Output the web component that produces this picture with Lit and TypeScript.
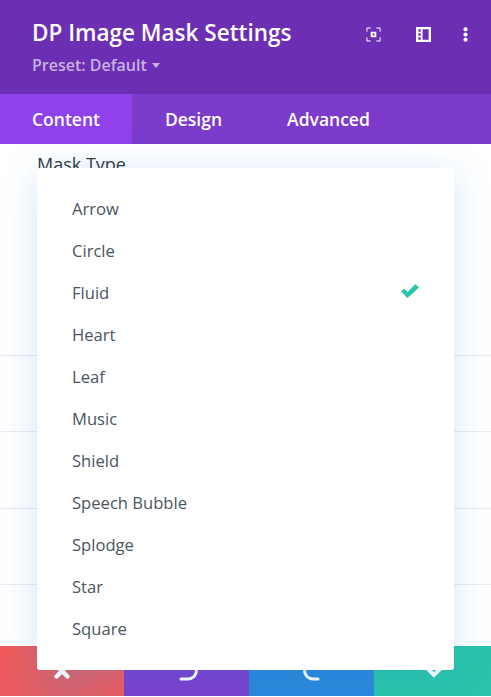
import { LitElement, html, css, svg } from "lit";
import { customElement } from "lit/decorators.js";

const OPTIONS = ["Arrow","Circle","Fluid","Heart","Leaf","Music","Shield","Speech Bubble","Splodge","Star","Square"];

@customElement("app-root")
export class AppRoot extends LitElement {
  static styles = css`
    :host { display: block; width: 491px; height: 697px; font-family: "Open Sans", sans-serif; background: #fff; overflow: hidden; }
    .modal { position: relative; display: flex; flex-direction: column; height: 696px; overflow: hidden; }
    .head { height: 94px; box-sizing: border-box; background: #6c2eb3; padding: 17px 32px 0; display: flex; justify-content: space-between; flex: none; }
    h1 { margin: 0; font-size: 22.5px; line-height: 32px; font-weight: 600; color: #fff; }
    .preset { margin-top: 6px; font-size: 16px; line-height: 20px; font-weight: 600; color: #c9b1e6; display: flex; align-items: center; gap: 5px; }
    .caret { width: 0; height: 0; border-left: 4px solid transparent; border-right: 4px solid transparent; border-top: 5px solid #c9b1e6; margin-top: 1px; }
    .icons { display: flex; align-items: flex-start; padding-top: 10px; margin-right: -13.5px; }
    .icons svg { display: block; width: 15px; height: 15px; fill: #fff; }
    .i1 { margin-right: 35px; } .i2 { margin-right: 26.5px; }
    .tabs { height: 50px; background: #7c3bcb; display: flex; flex: none; font-size: 17.5px; font-weight: 600; color: #fff; }
    .tab { display: flex; align-items: center; padding: 0 32px; }
    .tab.on { background: #8f42ec; }
    .tab.d { padding: 0 33px 0 33px; }
    .body { flex: 1 1 0; min-height: 0; overflow: hidden; background: #fff; display: flex; flex-direction: column; }
    .label { padding: 8px 37px 0; font-size: 18px; line-height: 24px; color: #32373c; font-weight: 500; height: 211px; box-sizing: border-box; flex: none; }
    .row { height: 76.33px; border-top: 1px solid #eaedf0; box-sizing: border-box; flex: none; }
    .foot { height: 50px; display: grid; grid-template-columns: 124px 125px 125px 117px; flex: none; color: #fff; }
    .foot div { display: flex; justify-content: center; align-items: center; }
    .foot svg { width: 24px; height: 24px; fill: none; stroke: #fff; stroke-width: 3; stroke-linecap: round; }
    .foot .x { stroke-width: 4.5; }
    .foot .c { stroke-width: 4; stroke-linecap: butt; }
    .f1 { background: linear-gradient(115deg, #f35a5a 0%, #d9616a 60%, #ef5a5c 100%); }
    .f2 { background: #7a40cc; }
    .f3 { background: #2b87da; }
    .f4 { background: #29c4a9; }
    .menu { position: absolute; left: 37px; top: 168px; width: 417px; height: 502px; box-sizing: border-box; background: #fff; border-radius: 3px; padding: 19px 0; box-shadow: 0 5px 40px rgba(43,135,218,.2); }
    .opt { height: 42px; display: flex; align-items: center; justify-content: space-between; padding: 0 35px; font-size: 16.6px; font-weight: 500; color: #4a5561; }
    .opt svg { width: 18px; height: 14px; fill: #29c4a9; margin-top: -2px; }
  `;

  render() {
    return html`<div class="modal">
      <div class="head">
        <div>
          <h1>DP Image Mask Settings</h1>
          <div class="preset">Preset: Default <span class="caret"></span></div>
        </div>
        <div class="icons">
          <svg class="i1" viewBox="0 0 16 16"><path d="M1 0.5h4v1H1.5V5h-1V1a.5.5 0 0 1 .5-.5zM11 .5h4a.5.5 0 0 1 .5.5v4h-1V1.500H11zM.5 11h1v3.500H5v1H1a.5.5 0 0 1-.5-.5zM14.500 11h1v4a.5.5 0 0 1-.5.5h-4v-1h3.500zM5 5h6v6H5zM7 7v2h2V7z" fill-rule="evenodd"/></svg>
          <svg class="i2" viewBox="0 0 16 16"><path fill-rule="evenodd" d="M0 0h16v16H0zM7 2.500v11h6.500v-11zM2.500 2.500v2.500h2.500V2.500zM2.500 6.700v2.600h2.500V6.700zM2.500 11v2.500h2.500V11z"/></svg>
          <svg viewBox="0 0 16 16"><circle cx="8" cy="2.500" r="2.200"/><circle cx="8" cy="8" r="2.200"/><circle cx="8" cy="13.500" r="2.200"/></svg>
        </div>
      </div>
      <div class="tabs">
        <div class="tab on">Content</div><div class="tab d">Design</div><div class="tab">Advanced</div>
      </div>
      <div class="body">
        <div class="label">Mask Type</div>
        <div class="row"></div><div class="row"></div><div class="row"></div><div class="row"></div>
      </div>
      <div class="foot">
        <div class="f1"><svg class="x" viewBox="0 0 24 24"><path d="M6.500 6.500l11 11M17.500 6.500l-11 11"/></svg></div>
        <div class="f2"><svg viewBox="0 0 24 24"><path d="M7 3h6a8.500 8.500 0 0 1 0 17H6"/></svg></div>
        <div class="f3"><svg viewBox="0 0 24 24"><path d="M20 3h-7a8.500 8.500 0 0 0 0 17h5"/></svg></div>
        <div class="f4"><svg class="c" viewBox="0 0 24 24"><path d="M3 6l10 10 8-8"/></svg></div>
      </div>
      <div class="menu">
        ${OPTIONS.map(o => html`<div class="opt">${o}${o === "Fluid" ? svg`<svg viewBox="0 0 18 14"><path d="M0 7.500L3 4.500 6.500 8 14.500 0 18 3.500 6.500 14z"/></svg>` : ""}</div>`)}
      </div>
    </div>`;
  }
}
